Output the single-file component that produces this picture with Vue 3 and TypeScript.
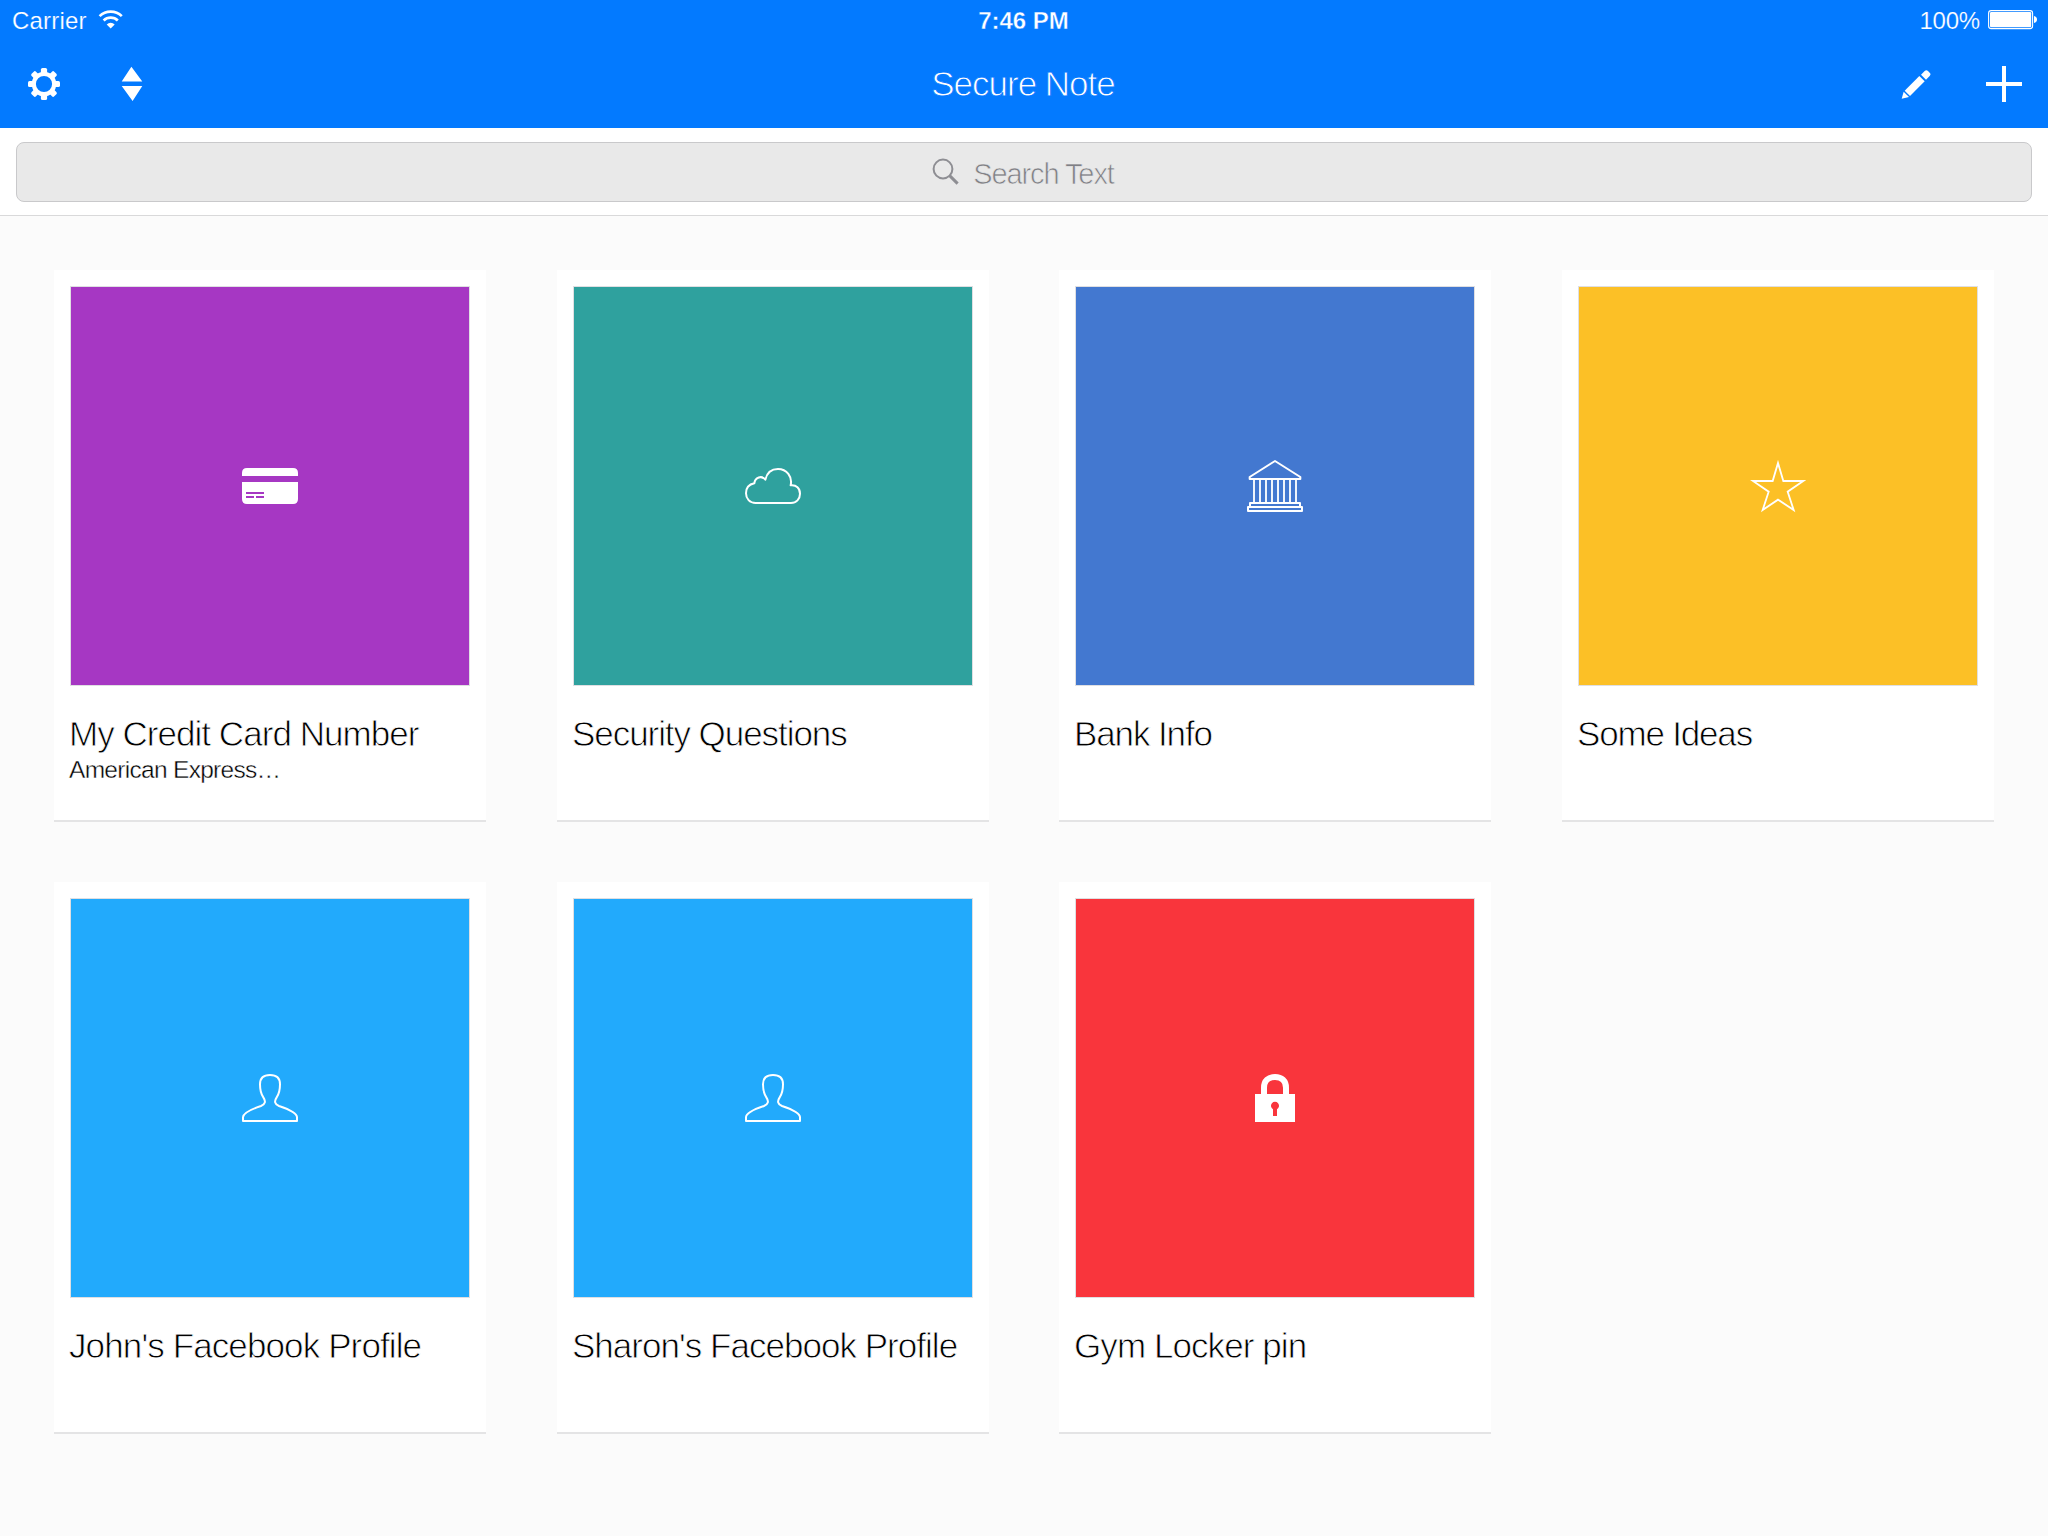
<script setup lang="ts">
type IconName = 'card' | 'cloud' | 'bank' | 'star' | 'person' | 'lock'

interface Note {
  title: string
  subtitle?: string
  icon: IconName
  color: string
  tracking: number
}

const notes: Note[] = [
  { title: 'My Credit Card Number', subtitle: 'American Express…', icon: 'card', color: '#a637c3', tracking: -0.96 },
  { title: 'Security Questions', icon: 'cloud', color: '#2fa19e', tracking: -1.06 },
  { title: 'Bank Info', icon: 'bank', color: '#4378d0', tracking: -1.1 },
  { title: 'Some Ideas', icon: 'star', color: '#fcc026', tracking: -1.18 },
  { title: "John's Facebook Profile", icon: 'person', color: '#22aafc', tracking: -0.88 },
  { title: "Sharon's Facebook Profile", icon: 'person', color: '#22aafc', tracking: -0.97 },
  { title: 'Gym Locker pin', icon: 'lock', color: '#f9353c', tracking: -0.92 },
]

const viewBoxes: Record<IconName, string> = {
  card: '0 3 300 270',
  cloud: '-21 3 300 270',
  bank: '-15 3 300 270',
  star: '-6 3 300 270',
  person: '0 9 300 270',
  lock: '-15 9 300 270',
}

const teeth = [0, 45, 90, 135, 180, 225, 270, 315]
const columns = [72, 90, 108, 126, 144, 162, 180, 198]
</script>

<template>
  <div class="screen">
    <header class="header">
      <div class="status">
        <div class="status-left">
          <span class="carrier">Carrier</span>
          <svg class="wifi" width="26" height="20" viewBox="0 0 26 20">
            <path d="M1.6 6.1a16 16 0 0 1 22.2 0" fill="none" stroke="#fff" stroke-width="2.7" />
            <path d="M5.6 10.5a10.3 10.3 0 0 1 14.2 0" fill="none" stroke="#fff" stroke-width="2.7" />
            <path d="M12.7 18.6 8.7 14.4a5.8 5.8 0 0 1 8 0z" fill="#fff" />
          </svg>
        </div>
        <span class="time">7:46 PM</span>
        <div class="status-right">
          <span class="percent">100%</span>
          <svg width="50" height="20" viewBox="0 0 50 20">
            <rect x="0.6" y="0.6" width="44" height="18" rx="2.6" fill="none" stroke="#fff" stroke-width="1.1" />
            <rect x="2" y="2" width="41.2" height="15.2" rx="1.2" fill="#fff" />
            <path d="M46 6q3 .6 3 3.5T46 13z" fill="#fff" />
          </svg>
        </div>
      </div>
      <div class="nav">
        <div class="nav-group nav-left">
          <svg width="32" height="32" viewBox="-16 -16 32 32">
            <circle r="10.2" fill="none" stroke="#fff" stroke-width="4.2" />
            <rect v-for="a in teeth" :key="a" x="-3.1" y="-16" width="6.2" height="6.4" rx="1.6" fill="#fff" :transform="`rotate(${a})`" />
          </svg>
          <svg width="22" height="36" viewBox="0 0 22 36">
            <path d="M10.4.8.7 15.4h20.6zM.7 20h20.6L11.6 35z" fill="#fff" />
          </svg>
        </div>
        <h1 class="heading">Secure Note</h1>
        <div class="nav-group nav-right">
          <svg class="pencil" width="30" height="30" viewBox="0 0 90 90">
            <g fill="#fff">
              <path d="M2 89 8 68 24 84z" />
              <path d="M11 65 55 21 71 37 27 81z" />
              <path d="M60 17 71 6q5-5 10 0l5 5q5 5 0 10L75 32z" />
            </g>
          </svg>
          <svg width="36" height="36" viewBox="0 0 36 36">
            <path d="M16 0h4v16h16v4H20v16h-4V20H0v-4h16z" fill="#fff" />
          </svg>
        </div>
      </div>
    </header>

    <div class="search-bar">
      <div class="search-field">
        <svg class="magnifier" width="28" height="28" viewBox="0 0 28 28">
          <circle cx="11" cy="11" r="9.4" fill="none" stroke="#8e8e93" stroke-width="2" />
          <path d="M17.6 17.6 25.6 25.6" stroke="#8e8e93" stroke-width="3" />
        </svg>
        <span class="placeholder">Search Text</span>
      </div>
    </div>

    <main class="grid">
      <article v-for="note in notes" :key="note.title" class="note">
        <div class="tile" :style="{ backgroundColor: note.color }">
          <svg width="100" height="90" :viewBox="viewBoxes[note.icon]">
            <template v-if="note.icon === 'card'">
              <path d="M66 108V99q0-15 15-15H219q15 0 15 15V108zM66 126H234V177q0 15-15 15H81q-15 0-15-15z" fill="#fff" />
              <path d="M78 156h54v6H78zM78 168h24v6H78zM108 168h24v6h-24z" :fill="note.color" />
            </template>
            <path
              v-else-if="note.icon === 'cloud'"
              d="M77 189C59 189 48 176 48 160 48 144 58 133 73 130 75 112 95 105 106 119 111 98 126 87 144 87 170 87 188 110 182 136 199 134 210 145 210 161 210 177 199 189 183 189Z"
              class="outline"
            />
            <template v-else-if="note.icon === 'bank'">
              <path d="M135 63 59 111V117H211V111Z" class="outline" />
              <path v-for="x in columns" :key="x" :d="`M${x} 117V188`" class="outline thin" />
              <path d="M60 198V189H210V198M54 201H216V213H54Z" class="outline" />
            </template>
            <path
              v-else-if="note.icon === 'star'"
              d="M144 69 160 123H220L173 155 191 210 144 179 98 210 116 155 69 123H128Z"
              class="outline star"
            />
            <path
              v-else-if="note.icon === 'person'"
              d="M150 75C131 75 120 84 120 103C120 122 122 131 130 142C138 154 136 163 123 168C99 176 69 187 69 202V213H231V202C231 187 201 176 177 168C164 163 162 154 170 142C178 131 180 122 180 103C180 84 169 75 150 75Z"
              class="outline"
            />
            <template v-else>
              <path d="M102 135V113C102 92 115 81 135 81S168 92 168 113V135" fill="none" stroke="#fff" stroke-width="18" />
              <path d="M75 132H195V216H75z" fill="#fff" />
              <path d="M129 198V178A12 12 0 1 1 141 178V198z" :fill="note.color" />
            </template>
          </svg>
        </div>
        <h2 class="title" :style="{ letterSpacing: note.tracking + 'px' }">{{ note.title }}</h2>
        <p v-if="note.subtitle" class="subtitle">{{ note.subtitle }}</p>
      </article>
    </main>
  </div>
</template>

<style>
body {
  margin: 0;
  background: #fbfbfb;
}
</style>

<style scoped>
.screen {
  width: 2048px;
  height: 1536px;
  overflow: hidden;
  background: #fbfbfb;
  font-family: 'Liberation Sans', Arial, sans-serif;
}
.screen svg {
  display: block;
  flex: none;
}
.header {
  height: 128px;
  background: #037aff;
  color: #fff;
}
.status {
  display: grid;
  grid-template-columns: 1fr auto 1fr;
  align-items: center;
  height: 40px;
  padding: 0 10px 0 12px;
  font-size: 24px;
  line-height: 40px;
}
.status span {
  padding-top: 2px;
  line-height: 38px;
}
.status-left,
.status-right {
  display: flex;
  align-items: center;
  height: 40px;
}
.status-left {
  gap: 11px;
}
.status-right {
  justify-content: flex-end;
  gap: 8px;
}
.carrier {
  letter-spacing: 0.2px;
  -webkit-text-stroke: 0.2px #037aff;
}
.status .time {
  margin-left: -3px;
  font-weight: 700;
  letter-spacing: 0;
  -webkit-text-stroke: 0.4px #037aff;
}
.percent {
  letter-spacing: -0.2px;
  -webkit-text-stroke: 0.2px #037aff;
}
.nav {
  display: grid;
  grid-template-columns: 1fr auto 1fr;
  align-items: center;
  height: 88px;
  padding: 0 26px 0 28px;
}
.nav-group {
  display: flex;
  align-items: center;
}
.nav-left {
  gap: 61px;
}
.nav-right {
  justify-content: flex-end;
  gap: 55px;
}
.pencil {
  margin-top: -1px;
}
.heading {
  margin: 0 0 0 -4px;
  font-size: 35px;
  font-weight: 400;
  line-height: 88px;
  letter-spacing: -1px;
  -webkit-text-stroke: 0.9px #037aff;
}
.search-bar {
  box-sizing: border-box;
  height: 88px;
  padding: 14px 16px 13px;
  background: #fff;
  border-bottom: 1px solid #d9d9da;
}
.search-field {
  box-sizing: border-box;
  display: flex;
  align-items: center;
  justify-content: center;
  gap: 13px;
  height: 60px;
  padding-right: 2px;
  background: #e9e9e9;
  border: 1px solid #c9c9cb;
  border-radius: 8px;
}
.magnifier {
  margin-top: -1px;
}
.placeholder {
  padding-top: 3px;
  font-size: 29px;
  line-height: 56px;
  letter-spacing: -1.1px;
  color: #808085;
  -webkit-text-stroke: 0.7px #e9e9e9;
}
.grid {
  display: grid;
  grid-template-columns: 503px 502px 503px 432px;
  grid-auto-rows: 552px;
  row-gap: 60px;
  padding: 54px;
}
.note {
  box-sizing: border-box;
  width: 432px;
  padding: 16px;
  background: #fff;
  border-bottom: 2px solid #e4e4e5;
}
.tile {
  box-sizing: border-box;
  display: flex;
  align-items: center;
  justify-content: center;
  width: 400px;
  height: 400px;
  border: 1px solid #dfdfe2;
}
.outline {
  fill: none;
  stroke: #fff;
  stroke-width: 6;
  stroke-linejoin: round;
}
.thin {
  stroke-width: 5.5;
}
.star {
  stroke-linejoin: miter;
  stroke-width: 5.5;
}
.title,
.subtitle {
  margin: 0 0 0 -1px;
  color: #000;
  font-weight: 400;
  white-space: nowrap;
}
.title {
  margin-top: 27px;
  font-size: 35px;
  line-height: 42px;
  -webkit-text-stroke: 0.8px #fff;
}
.subtitle {
  margin-top: 1px;
  font-size: 24.5px;
  line-height: 28px;
  letter-spacing: -0.7px;
  -webkit-text-stroke: 0.4px #fff;
}
</style>
